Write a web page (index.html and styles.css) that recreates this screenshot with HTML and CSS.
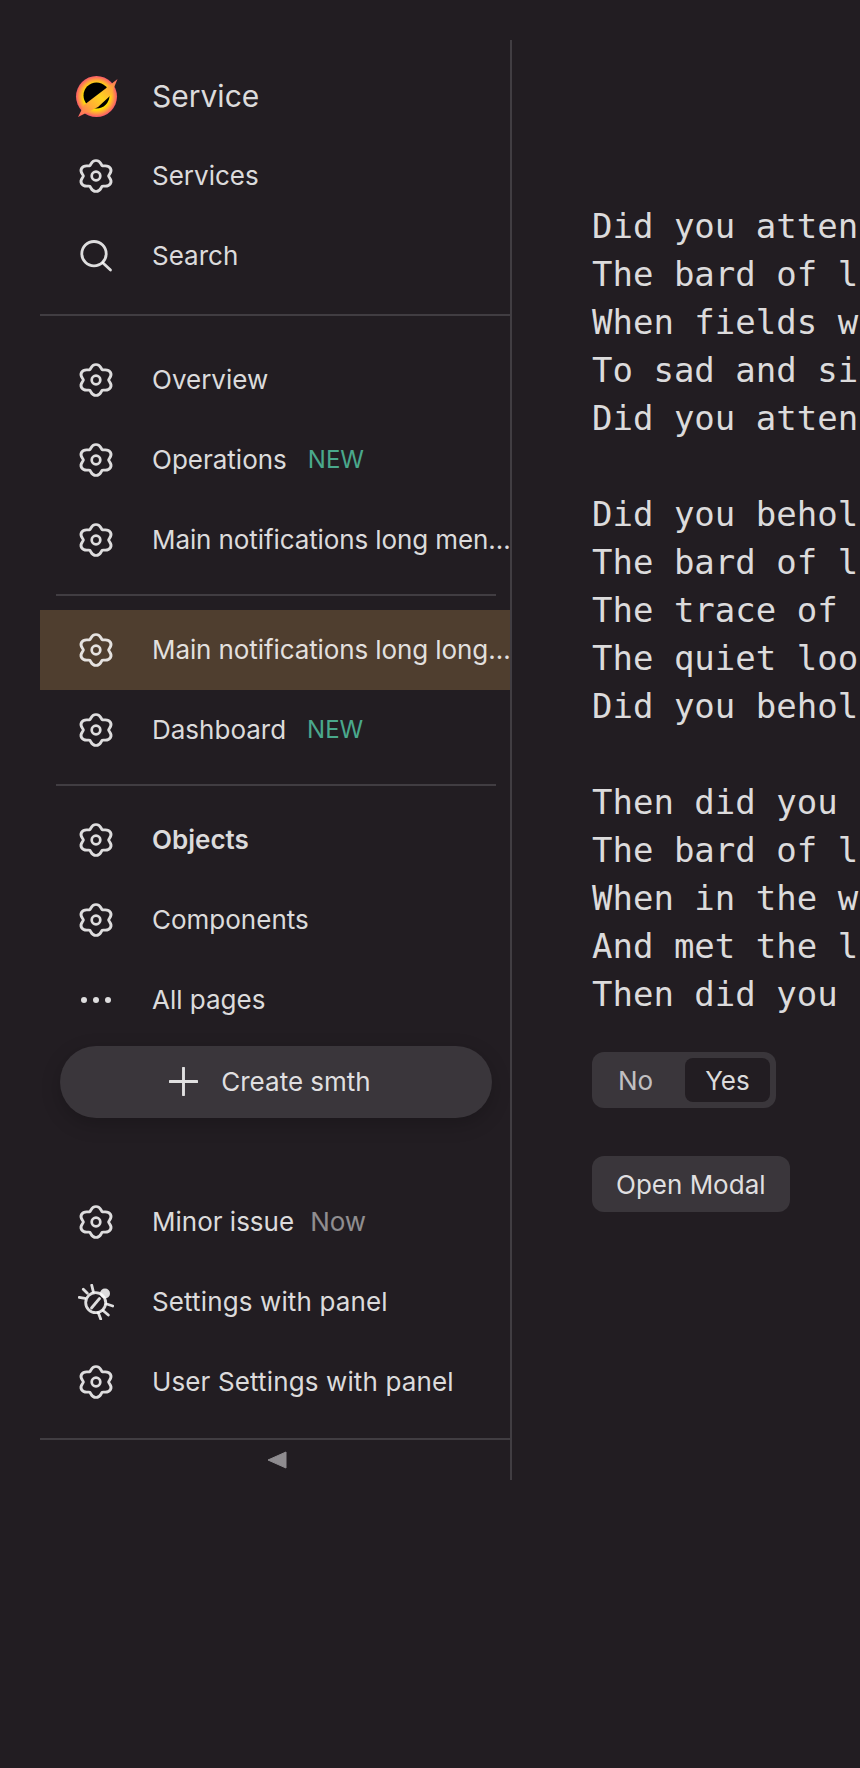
FILE: index.html
```html
<!DOCTYPE html>
<html lang="en">
<head>
<meta charset="utf-8">
<title>Service</title>
<link rel="stylesheet" href="styles.css">
</head>
<body>
<svg class="defs" width="0" height="0" aria-hidden="true">
  <defs>
    <symbol id="gear" viewBox="0 0 36 36">
      <g transform="translate(18 18) scale(1.07 1)" fill="none" stroke="currentColor" stroke-width="2.700" stroke-linejoin="round">
        <path d="M11.8 0C11.8 1.6 15.72 3.77 13.42 7.75C11.12 11.73 7.29 9.42 5.9 10.22C4.51 11.02 4.6 15.5 0 15.5C-4.6 15.5 -4.51 11.02 -5.9 10.22C-7.29 9.42 -11.12 11.73 -13.42 7.75C-15.72 3.77 -11.8 1.6 -11.8 0C-11.8 -1.6 -15.72 -3.77 -13.42 -7.75C-11.12 -11.73 -7.29 -9.42 -5.9 -10.22C-4.51 -11.02 -4.6 -15.5 0 -15.5C4.6 -15.5 4.51 -11.02 5.9 -10.22C7.29 -9.42 11.12 -11.73 13.42 -7.75C15.72 -3.77 11.8 -1.6 11.8 0Z"/>
      </g>
      <circle cx="18" cy="18" r="4.300" fill="none" stroke="currentColor" stroke-width="2.700"/>
    </symbol>
    <radialGradient id="glow" cx="50%" cy="50%" r="50%">
      <stop offset="0.62" stop-color="#ffe600"/>
      <stop offset="0.8" stop-color="#ffa53a"/>
      <stop offset="1" stop-color="#f8586a"/>
    </radialGradient>
    <linearGradient id="band" x1="0" y1="1" x2="1" y2="0">
      <stop offset="0" stop-color="#ff5f6a"/>
      <stop offset="0.3" stop-color="#ffab36"/>
      <stop offset="0.55" stop-color="#ffd21f"/>
      <stop offset="0.8" stop-color="#ffa53a"/>
      <stop offset="1" stop-color="#fb5f6a"/>
    </linearGradient>
  </defs>
</svg>

<div class="page">
  <aside class="sidebar">
    <div class="group group-top">
      <div class="row row-logo">
        <span class="icon icon-logo">
          <svg width="44" height="44" viewBox="0 0 44 44">
            <circle cx="22.500" cy="22.500" r="20.500" fill="url(#glow)"/>
            <circle cx="22.500" cy="21.500" r="13" fill="#000"/>
            <path d="M4 43 10 31 31 15 43.500 5 37 21 24 33Z" fill="url(#band)"/>
          </svg>
        </span>
        <span class="label label-logo">Service</span>
      </div>
      <div class="row"><svg class="icon"><use href="#gear"/></svg><span class="label">Services</span></div>
      <div class="row">
        <svg class="icon" viewBox="0 0 36 36"><circle cx="16" cy="15.700" r="12.200" fill="none" stroke="currentColor" stroke-width="2.800"/><path d="M25 25 32.500 32" fill="none" stroke="currentColor" stroke-width="2.800" stroke-linecap="round"/></svg>
        <span class="label">Search</span>
      </div>
    </div>

    <div class="line line-full"></div>

    <div class="group group-nav">
      <div class="row"><svg class="icon"><use href="#gear"/></svg><span class="label">Overview</span></div>
      <div class="row"><svg class="icon"><use href="#gear"/></svg><span class="label">Operations</span><span class="tag tag-new">NEW</span></div>
      <div class="row"><svg class="icon"><use href="#gear"/></svg><span class="label label-long">Main notifications long menu item</span></div>
    </div>

    <div class="line line-short"></div>

    <div class="group">
      <div class="row row-active"><svg class="icon"><use href="#gear"/></svg><span class="label label-long">Main notifications long long menu item</span></div>
      <div class="row"><svg class="icon"><use href="#gear"/></svg><span class="label">Dashboard</span><span class="tag tag-new">NEW</span></div>
    </div>

    <div class="line line-short"></div>

    <div class="group">
      <div class="row"><svg class="icon"><use href="#gear"/></svg><span class="label label-bold">Objects</span></div>
      <div class="row"><svg class="icon"><use href="#gear"/></svg><span class="label">Components</span></div>
      <div class="row">
        <svg class="icon" viewBox="0 0 36 36"><circle cx="6" cy="18" r="3" fill="currentColor"/><circle cx="18" cy="18" r="3" fill="currentColor"/><circle cx="30" cy="18" r="3" fill="currentColor"/></svg>
        <span class="label">All pages</span>
      </div>
    </div>

    <button class="create" type="button">
      <svg class="create-icon" viewBox="0 0 28 28"><path d="M14 1v26M1 14h26" fill="none" stroke="currentColor" stroke-width="2.800" stroke-linecap="round"/></svg>
      <span>Create smth</span>
    </button>

    <div class="group group-bottom">
      <div class="row"><svg class="icon"><use href="#gear"/></svg><span class="label">Minor issue</span><span class="tag tag-muted">Now</span></div>
      <div class="row">
        <svg class="icon" viewBox="0 0 36 36" fill="none" stroke="currentColor" stroke-width="2.800" stroke-linecap="round">
          <circle cx="17.700" cy="18.700" r="10"/>
          <path d="M13.500 24 21.500 14.500"/>
          <path d="M5.300 5.300 9.300 9.300M1.200 13.300 7 14.300M13.700 1.200 15.300 7.700M34.700 22 28.700 20M30.300 31 25.300 26.700M22.700 35 20.300 28.700"/>
          <circle cx="27" cy="9.500" r="5" fill="currentColor" stroke="none"/>
        </svg>
        <span class="label label-wide">Settings with panel</span>
      </div>
      <div class="row"><svg class="icon"><use href="#gear"/></svg><span class="label label-wide">User Settings with panel</span></div>
    </div>

    <div class="line line-end"></div>

    <div class="collapse">
      <svg class="collapse-icon" viewBox="0 0 20 18"><path d="M19 1v16L1 9Z" fill="currentColor" stroke="currentColor" stroke-linejoin="round"/></svg>
    </div>
  </aside>

  <main class="content">
<pre class="poem">Did you atten
The bard of l
When fields w
To sad and si
Did you atten

Did you behol
The bard of l
The trace of 
The quiet loo
Did you behol

Then did you 
The bard of l
When in the w
And met the l
Then did you </pre>
    <div class="segment">
      <span class="segment-item">No</span>
      <span class="segment-item segment-item-on">Yes</span>
    </div>
    <button class="modal-button" type="button">Open Modal</button>
  </main>
</div>
</body>
</html>
```

FILE: styles.css
```css
* {
  box-sizing: border-box;
}

html,
body {
  margin: 0;
  height: 100%;
  overflow: hidden;
  background: #221d22;
}

body {
  color: rgba(255, 255, 255, 0.85);
  font-family: Inter, "Liberation Sans", sans-serif;
  font-size: 26px;
}

.defs {
  position: absolute;
}

.page {
  display: flex;
  align-items: flex-start;
  padding: 40px 0 0 40px;
  height: 100%;
}

.sidebar {
  flex: none;
  display: flex;
  flex-direction: column;
  width: 472px;
  height: 1440px;
  border-right: 2px solid #413d42;
}

.group-top {
  padding-top: 16px;
}

.group-nav {
  padding-top: 24px;
}

.group-bottom {
  padding-top: 64px;
}

.row {
  display: flex;
  align-items: center;
  height: 80px;
  padding-left: 38px;
}

.row-active {
  background: #4f3e2f;
}

.icon {
  flex: none;
  width: 36px;
  height: 36px;
  margin-right: 38px;
}

.icon-logo {
  display: flex;
  align-items: center;
  justify-content: center;
}

.icon-logo svg {
  flex: none;
}

.label {
  white-space: nowrap;
  line-height: 36px;
}

.label-logo {
  font-size: 30px;
}

.label-bold {
  font-weight: 600;
}

.label-wide {
  letter-spacing: 0.13px;
}

.label-long {
  flex: 1;
  min-width: 0;
  margin-right: -4px;
  overflow: hidden;
  text-overflow: ellipsis;
  letter-spacing: -0.1px;
}

.tag {
  line-height: 36px;
}

.tag-new {
  margin-left: 21px;
  font-size: 24px;
  color: #4aa88c;
}

.tag-muted {
  margin-left: 16px;
  color: rgba(255, 255, 255, 0.5);
}

.line {
  flex: none;
  height: 2px;
  background: #413d42;
}

.line-full {
  margin-top: 18px;
}

.line-end {
  margin-top: 16px;
}

.line-short {
  margin: 14px 14px 14px 16px;
}

.create {
  display: flex;
  align-items: center;
  justify-content: center;
  gap: 23px;
  flex: none;
  height: 72px;
  margin: 6px 18px 0 20px;
  padding: 0 12px 2px 0;
  border: 0;
  border-radius: 36px;
  background: #3a363b;
  box-shadow: 0 6px 20px rgba(0, 0, 0, 0.2);
  color: inherit;
  font: inherit;
}

.create-icon {
  width: 29px;
  height: 29px;
}

.collapse {
  display: flex;
  justify-content: center;
  padding: 11px 0 0 4px;
}

.collapse-icon {
  width: 20px;
  height: 18px;
  color: #8f8c90;
}

.content {
  flex: none;
  padding: 162px 0 0 80px;
}

.poem {
  margin: 0;
  font-family: "DejaVu Sans Mono", monospace;
  font-size: 34px;
  line-height: 48px;
  white-space: pre;
}

.segment {
  display: inline-flex;
  gap: 12px;
  margin-top: 34px;
  padding: 6px;
  border-radius: 12px;
  background: #3a363b;
  vertical-align: top;
}

.segment-item {
  display: flex;
  align-items: center;
  height: 44px;
  padding: 0 20px;
  color: rgba(255, 255, 255, 0.7);
}

.segment-item-on {
  border-radius: 8px;
  background: #221d22;
  color: rgba(255, 255, 255, 0.85);
}

.modal-button {
  display: block;
  height: 56px;
  margin-top: 48px;
  padding: 0 24px;
  border: 0;
  border-radius: 12px;
  background: #3a363b;
  color: inherit;
  font: inherit;
}
```
